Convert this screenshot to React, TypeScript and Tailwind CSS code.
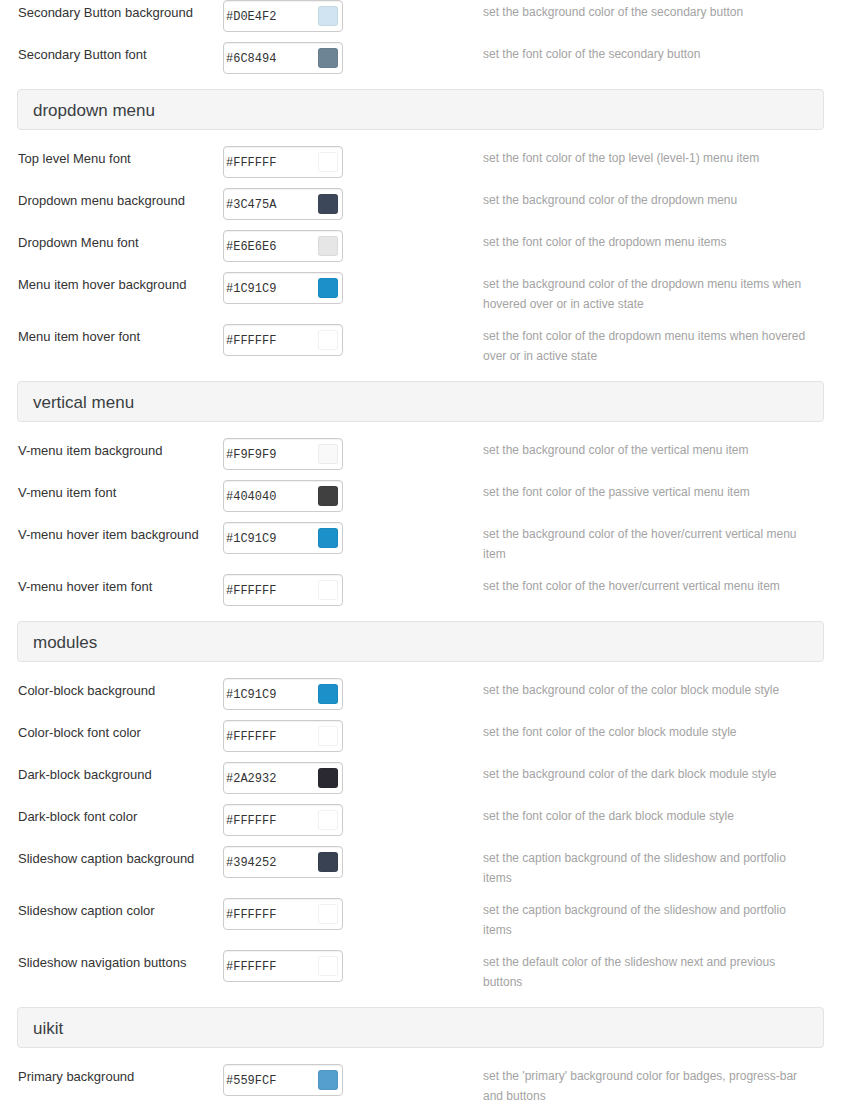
type Row = { label: string; value: string; desc: string };
type Section = { title?: string; rows: Row[] };

const sections: Section[] = [
  {
    rows: [
      { label: "Secondary Button background", value: "#D0E4F2", desc: "set the background color of the secondary button" },
      { label: "Secondary Button font", value: "#6C8494", desc: "set the font color of the secondary button" },
    ],
  },
  {
    title: "dropdown menu",
    rows: [
      { label: "Top level Menu font", value: "#FFFFFF", desc: "set the font color of the top level (level-1) menu item" },
      { label: "Dropdown menu background", value: "#3C475A", desc: "set the background color of the dropdown menu" },
      { label: "Dropdown Menu font", value: "#E6E6E6", desc: "set the font color of the dropdown menu items" },
      { label: "Menu item hover background", value: "#1C91C9", desc: "set the background color of the dropdown menu items when hovered over or in active state" },
      { label: "Menu item hover font", value: "#FFFFFF", desc: "set the font color of the dropdown menu items when hovered over or in active state" },
    ],
  },
  {
    title: "vertical menu",
    rows: [
      { label: "V-menu item background", value: "#F9F9F9", desc: "set the background color of the vertical menu item" },
      { label: "V-menu item font", value: "#404040", desc: "set the font color of the passive vertical menu item" },
      { label: "V-menu hover item background", value: "#1C91C9", desc: "set the background color of the hover/current vertical menu item" },
      { label: "V-menu hover item font", value: "#FFFFFF", desc: "set the font color of the hover/current vertical menu item" },
    ],
  },
  {
    title: "modules",
    rows: [
      { label: "Color-block background", value: "#1C91C9", desc: "set the background color of the color block module style" },
      { label: "Color-block font color", value: "#FFFFFF", desc: "set the font color of the color block module style" },
      { label: "Dark-block background", value: "#2A2932", desc: "set the background color of the dark block module style" },
      { label: "Dark-block font color", value: "#FFFFFF", desc: "set the font color of the dark block module style" },
      { label: "Slideshow caption background", value: "#394252", desc: "set the caption background of the slideshow and portfolio items" },
      { label: "Slideshow caption color", value: "#FFFFFF", desc: "set the caption background of the slideshow and portfolio items" },
      { label: "Slideshow navigation buttons", value: "#FFFFFF", desc: "set the default color of the slideshow next and previous buttons" },
    ],
  },
  {
    title: "uikit",
    rows: [
      { label: "Primary background", value: "#559FCF", desc: "set the 'primary' background color for badges, progress-bar and buttons" },
    ],
  },
];

function ColorRow({ row }: { row: Row }) {
  return (
    <div className="mb-[10px] flex items-start">
      <div className="w-[206px] shrink-0 pl-px pt-[3px] text-[13px] leading-5 text-[#333]">
        {row.label}
      </div>
      <div className="flex h-8 w-[120px] shrink-0 items-center justify-between rounded-[4px] border border-[#ccc] bg-white pl-[2px] pr-[4px] shadow-[inset_0_1px_1px_rgba(0,0,0,0.06)]">
        <span className="pt-[2px] font-['Liberation_Mono',monospace] text-[12px] text-[#333]">
          {row.value}
        </span>
        <span
          className="h-5 w-5 rounded-[3px] border border-black/5"
          style={{ backgroundColor: row.value }}
        />
      </div>
      <div className="ml-[140px] w-[334px] pt-[2px] text-[12px] leading-5 text-[#a3a3a3]">
        {row.desc}
      </div>
    </div>
  );
}

export default function App() {
  return (
    <div className="min-h-screen bg-white pl-[17px] pr-[21px] font-['Helvetica_Neue','Liberation_Sans',Arial,sans-serif]">
      {sections.map((s, i) => (
        <div key={i}>
          {s.title && (
            <div className="mb-4 mt-[15px] flex h-[41px] items-center rounded-[4px] border border-[#e3e3e3] bg-[#f5f5f5] px-[15px] pt-[2px] text-[17px] text-[#3a3f44]">
              {s.title}
            </div>
          )}
          {s.rows.map((r) => (
            <ColorRow key={r.label} row={r} />
          ))}
        </div>
      ))}
    </div>
  );
}
